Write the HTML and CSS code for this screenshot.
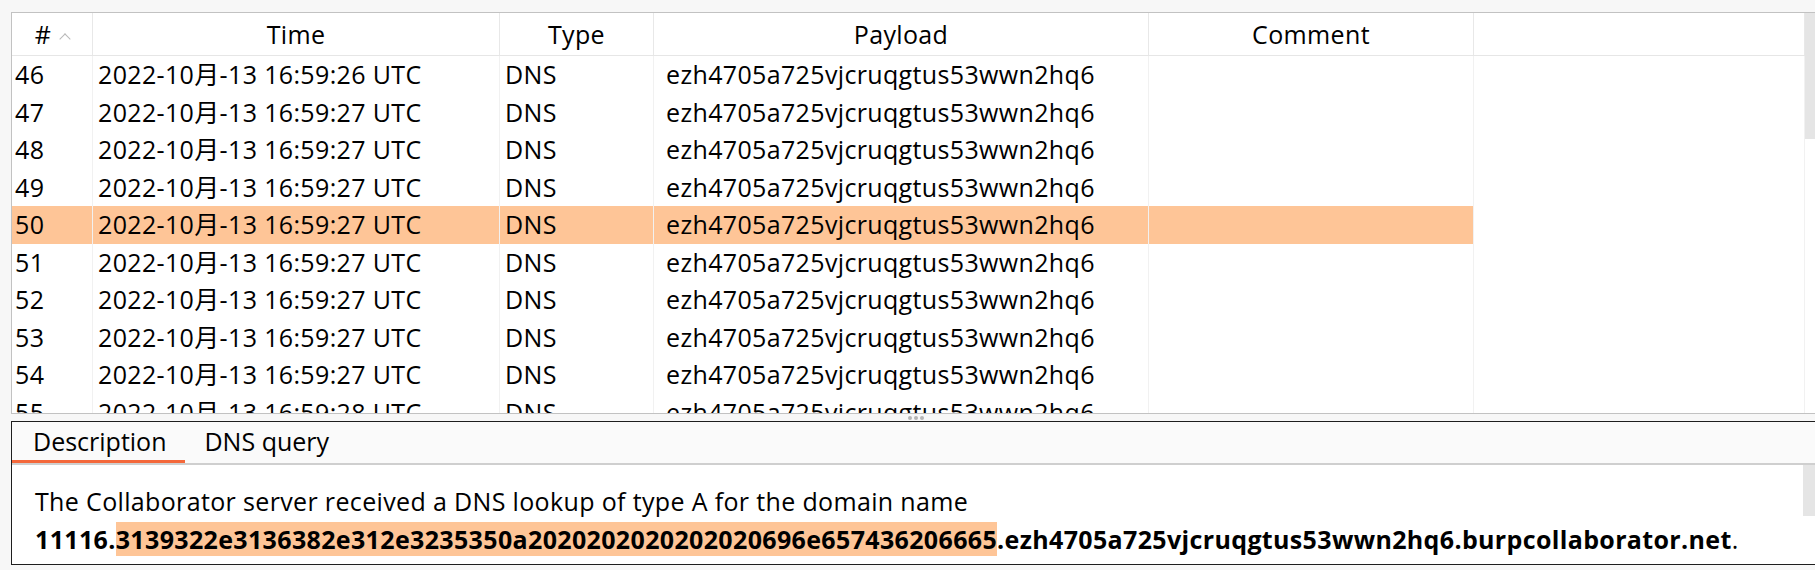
FILE: index.html
```html
<!DOCTYPE html>
<html>
<head>
<meta charset="utf-8">
<link rel="stylesheet" href="styles.css">
</head>
<body>
<div class="app">
  <div class="table-wrap">
    <div class="table">
      <div class="row head">
        <div class="cell">#<span class="caret"></span></div>
        <div class="cell">Time</div>
        <div class="cell">Type</div>
        <div class="cell">Payload</div>
        <div class="cell">Comment</div>
        <div class="cell"></div>
      </div>
      <div class="body">
        <div class="row"><div class="cell">46</div><div class="cell">2022-10月-13 16:59:26 UTC</div><div class="cell">DNS</div><div class="cell">ezh4705a725vjcruqgtus53wwn2hq6</div><div class="cell"></div><div class="cell"></div></div>
        <div class="row"><div class="cell">47</div><div class="cell">2022-10月-13 16:59:27 UTC</div><div class="cell">DNS</div><div class="cell">ezh4705a725vjcruqgtus53wwn2hq6</div><div class="cell"></div><div class="cell"></div></div>
        <div class="row"><div class="cell">48</div><div class="cell">2022-10月-13 16:59:27 UTC</div><div class="cell">DNS</div><div class="cell">ezh4705a725vjcruqgtus53wwn2hq6</div><div class="cell"></div><div class="cell"></div></div>
        <div class="row"><div class="cell">49</div><div class="cell">2022-10月-13 16:59:27 UTC</div><div class="cell">DNS</div><div class="cell">ezh4705a725vjcruqgtus53wwn2hq6</div><div class="cell"></div><div class="cell"></div></div>
        <div class="row selected"><div class="cell">50</div><div class="cell">2022-10月-13 16:59:27 UTC</div><div class="cell">DNS</div><div class="cell">ezh4705a725vjcruqgtus53wwn2hq6</div><div class="cell"></div><div class="cell"></div></div>
        <div class="row"><div class="cell">51</div><div class="cell">2022-10月-13 16:59:27 UTC</div><div class="cell">DNS</div><div class="cell">ezh4705a725vjcruqgtus53wwn2hq6</div><div class="cell"></div><div class="cell"></div></div>
        <div class="row"><div class="cell">52</div><div class="cell">2022-10月-13 16:59:27 UTC</div><div class="cell">DNS</div><div class="cell">ezh4705a725vjcruqgtus53wwn2hq6</div><div class="cell"></div><div class="cell"></div></div>
        <div class="row"><div class="cell">53</div><div class="cell">2022-10月-13 16:59:27 UTC</div><div class="cell">DNS</div><div class="cell">ezh4705a725vjcruqgtus53wwn2hq6</div><div class="cell"></div><div class="cell"></div></div>
        <div class="row"><div class="cell">54</div><div class="cell">2022-10月-13 16:59:27 UTC</div><div class="cell">DNS</div><div class="cell">ezh4705a725vjcruqgtus53wwn2hq6</div><div class="cell"></div><div class="cell"></div></div>
        <div class="row"><div class="cell">55</div><div class="cell">2022-10月-13 16:59:28 UTC</div><div class="cell">DNS</div><div class="cell">ezh4705a725vjcruqgtus53wwn2hq6</div><div class="cell"></div><div class="cell"></div></div>
      </div>
    </div>
    <div class="vscroll"><div class="thumb"></div></div>
  </div>
  <div class="splitter"><span class="dot"></span><span class="dot"></span><span class="dot"></span></div>
  <div class="panel">
    <div class="tabs">
      <div class="tab active">Description</div>
      <div class="tab">DNS query</div>
    </div>
    <div class="content">
      <div class="text">
        <div class="line">The Collaborator server received a DNS lookup of type A for the domain name</div>
        <div class="line"><b>11116.<span class="hl">3139322e3136382e312e3235350a2020202020202020696e657436206665</span>.ezh4705a725vjcruqgtus53wwn2hq6.burpcollaborator.net</b>.</div>
      </div>
      <div class="vscroll small"><div class="thumb"></div></div>
    </div>
  </div>
</div>
</body>
</html>
```

FILE: styles.css
```css
html, body {
  margin: 0;
  padding: 0;
}
body {
  background: #f7f7f7;
  font-family: "Open Sans", "Noto Sans CJK SC", sans-serif;
  font-size: 25px;
  letter-spacing: 0.35px;
  color: #000;
  width: 1815px;
  height: 570px;
  overflow: hidden;
}
.app {
  padding: 12px 0 0 11px;
  display: flex;
  flex-direction: column;
}
.table-wrap {
  display: flex;
  height: 400px;
  border-top: 1px solid #c2c2c2;
  border-bottom: 1px solid #c2c2c2;
  border-left: 1px solid #c2c2c2;
  background: #fff;
}
.table {
  flex: 1;
  display: flex;
  flex-direction: column;
  overflow: hidden;
}
.row {
  display: grid;
  grid-template-columns: 81px 407px 154px 495px 325px 1fr;
  height: 37.5px;
  line-height: 37.5px;
}
.row .cell {
  border-right: 1px solid #f1f1f1;
  padding-left: 3px;
  white-space: nowrap;
  overflow: hidden;
}
.row .cell:nth-child(2) { padding-left: 5px; }
.row .cell:nth-child(3) { padding-left: 5px; }
.row .cell:nth-child(4) { padding-left: 12px; }
.row.selected .cell { background: #fec597; }
.row.selected .cell:last-child { background: #fff; }
.row.head {
  height: 42px;
  line-height: 42px;
  border-bottom: 1px solid #e6e6e6;
  flex: none;
}
.row.head .cell {
  text-align: center;
  padding: 0;
  border-right: 1px solid #e8e8e8;
}
.caret {
  display: inline-block;
  width: 7px;
  height: 7px;
  border-left: 1.5px solid #b8b8b8;
  border-top: 1.5px solid #b8b8b8;
  transform: rotate(45deg);
  margin-left: 10px;
  vertical-align: 1px;
}
.body {
  flex: 1;
  overflow: hidden;
}
.vscroll {
  width: 10px;
  flex: none;
  background: #fff;
}
.vscroll .thumb {
  height: 126px;
  background: #e5e5e5;
}
.splitter {
  height: 7px;
  display: flex;
  justify-content: center;
  align-items: center;
  gap: 2px;
  padding-left: 6px;
}
.dot {
  width: 4px;
  height: 4px;
  border-radius: 50%;
  background: #b5b5b5;
}
.panel {
  border: 1px solid #1e1e1e;
  border-right: none;
  background: #fff;
}
.tabs {
  display: flex;
  height: 41px;
  background: #fafafa;
  border-bottom: 2px solid #cfcfcf;
}
.tab {
  padding: 0 19px 0 21px;
  line-height: 38px;
  border-bottom: 3px solid transparent;
  white-space: nowrap;
  letter-spacing: 0;
}
.tab.active {
  border-bottom-color: #f4683b;
}
.tab + .tab {
  padding-left: 19px;
}
.content {
  display: flex;
  height: 99px;
}
.text {
  flex: 1;
  padding: 17px 0 0 23px;
  line-height: 38px;
  white-space: nowrap;
}
.hl {
  background: #fec597;
}
.vscroll.small {
  width: 12px;
}
.vscroll.small .thumb {
  height: 51px;
}
```
